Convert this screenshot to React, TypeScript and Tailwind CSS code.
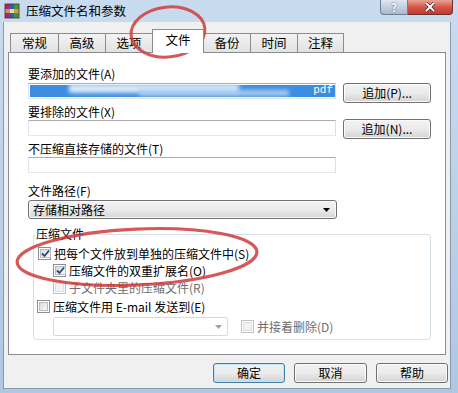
import React from 'react';

const CheckBox = ({ checked = false, disabled = false }: { checked?: boolean; disabled?: boolean }) => (
  <span
    className={
      disabled
        ? 'w-[13px] h-[13px] border border-[#c2c2c2] bg-white p-[1px] shrink-0 flex'
        : 'w-[13px] h-[13px] border border-[#8e8f8f] bg-white p-[1px] shrink-0 flex'
    }
  >
    <span
      className={
        disabled
          ? 'flex-1 bg-[#f2f2f2] border border-[#dedede]'
          : 'flex-1 bg-gradient-to-br from-[#d7dbe0] to-[#f8f8f8] border border-[#b9bcc1] flex items-center justify-center'
      }
    >
      {checked && (
        <svg width="9" height="9" viewBox="0 0 9 9">
          <path d="M1 4.5 L3.5 7 L8 1.5" fill="none" stroke="#2d4477" strokeWidth="1.8" />
        </svg>
      )}
    </span>
  </span>
);

const Tab = ({ label, w, active = false }: { label: string; w: string; active?: boolean }) => (
  <div
    className={
      active
        ? `${w} h-[24px] -mb-px -ml-px z-10 bg-white border border-b-0 border-[#898c95] flex items-start justify-center pt-[3px]`
        : `${w} h-[19px] -ml-px first:ml-0 bg-gradient-to-b from-[#f3f3f3] to-[#e2e2e2] border border-b-0 border-[#898c95] flex items-center justify-center`
    }
  >
    <span className="text-[12.5px] leading-[14px]">{label}</span>
  </div>
);

const TextBox = ({ w, children }: { w: string; children?: React.ReactNode }) => (
  <div className={`${w} h-[16px] border border-[#abadb3] border-b-[#e3e9ef] border-r-[#dbdfe6] border-l-[#e2e3ea] bg-white relative overflow-hidden`}>
    {children}
  </div>
);

const PushButton = ({ label, w, def = false }: { label: string; w: string; def?: boolean }) => (
  <button
    className={`${w} h-[20px] rounded-[3px] border ${
      def ? 'border-[#3c7fb1] shadow-[inset_0_0_0_1px_#bfe4f9]' : 'border-[#707070] shadow-[inset_0_0_0_1px_#fcfcfc]'
    } bg-gradient-to-b from-[#f2f2f2] via-[#ebebeb] to-[#d3d3d3] text-[12px] leading-[14px] text-black flex items-center justify-center`}
  >
    {label}
  </button>
);

export default function App() {
  return (
    <div className="w-[458px] h-[393px] relative overflow-hidden flex flex-col bg-gradient-to-b from-[#c9dbef] via-[#bcd2ea] to-[#aec7e3] font-['Noto_Sans_CJK_SC',sans-serif] text-black text-[12px] leading-[14px]">
      {/* title bar */}
      <div className="h-[22px] flex items-start shrink-0">
        <svg className="ml-[4px] mt-[3px]" width="16" height="16" viewBox="0 0 16 16">
          <rect x="1" y="1" width="4" height="14" fill="#b0207a" />
          <rect x="5" y="1" width="5" height="14" fill="#2a5fb8" />
          <rect x="10" y="1" width="5" height="14" fill="#3a9a3a" />
          <rect x="1" y="6" width="14" height="4" fill="#c89a5a" />
          <rect x="6" y="6" width="4" height="4" fill="#e8d7a8" />
          <rect x="1" y="1" width="14" height="14" fill="none" stroke="#5a2a10" strokeWidth="0.8" />
        </svg>
        <span className="ml-[6px] mt-[4px] text-[12.5px]">压缩文件名和参数</span>
        <div className="ml-auto mr-[5px] flex">
          <div className="w-[28px] h-[15px] rounded-bl-[4px] border border-t-0 border-[#6f7f93] bg-gradient-to-b from-[#dfe7f1] via-[#c3d0df] to-[#a9b9cc] flex items-center justify-center text-white text-[11px] font-bold [text-shadow:0_0_2px_#404c5c]">
            ?
          </div>
          <div className="w-[45px] h-[15px] rounded-br-[4px] border border-l-0 border-t-0 border-[#6b3131] bg-gradient-to-b from-[#e8a493] via-[#d4574a] to-[#c3372c] flex items-center justify-center">
            <svg width="12" height="10" viewBox="0 0 12 10">
              <path d="M2 1 L10 9 M10 1 L2 9" stroke="#3a1a1a" strokeWidth="3.2" />
              <path d="M2 1 L10 9 M10 1 L2 9" stroke="#fff" strokeWidth="2" />
            </svg>
          </div>
        </div>
      </div>

      {/* client */}
      <div className="ml-[3px] mr-[7px] h-[367px] bg-[#f0f0f0] border-l border-r border-b border-[#8799ae] flex flex-col">
        <div className="mt-[7px] ml-[6px] h-[23px] flex items-end">
          <Tab label="常规" w="w-[49px]" />
          <Tab label="高级" w="w-[48px]" />
          <Tab label="选项" w="w-[48px]" />
          <Tab label="文件" w="w-[52px]" active />
          <Tab label="备份" w="w-[48px]" />
          <Tab label="时间" w="w-[48px]" />
          <Tab label="注释" w="w-[47px]" />
        </div>

        <div className="ml-[4px] w-[438px] h-[303px] border border-[#898c95] bg-white flex flex-col pl-[19px]">
          <span className="mt-[14px]">要添加的文件(A)</span>
          <div className="mt-[2px] flex items-start">
            <TextBox w="w-[308px]">
              <div className="absolute inset-y-[1px] left-[1px] right-0 bg-[#3c8de0]" />
              <div className="absolute top-[0px] left-[40px] w-[170px] h-[9px] bg-[#d8e9f8] blur-[2px]" />
              <div className="absolute top-[6px] left-[110px] w-[150px] h-[6px] bg-[#a9cdf0] blur-[2px]" />
              <span className="absolute right-[2px] top-0 text-white text-[11px] leading-[13px] font-['Liberation_Mono',monospace]">pdf</span>
            </TextBox>
            <div className="ml-[7px]">
              <PushButton label="追加(P)..." w="w-[88px]" />
            </div>
          </div>
          <span className="mt-[2px]">要排除的文件(X)</span>
          <div className="flex items-start">
            <div className="mt-[1px]">
              <TextBox w="w-[308px]" />
            </div>
            <div className="ml-[7px]">
              <PushButton label="追加(N)..." w="w-[88px]" />
            </div>
          </div>
          <span className="mt-[3px]">不压缩直接存储的文件(T)</span>
          <div className="mt-[1px]">
            <TextBox w="w-[308px]" />
          </div>
          <span className="mt-[11px]">文件路径(F)</span>
          <div className="mt-[2px] w-[309px] h-[19px] rounded-[3px] border border-[#707070] bg-gradient-to-b from-[#f2f2f2] via-[#ebebeb] to-[#d6d6d6] shadow-[inset_0_0_0_1px_#fbfbfb] flex items-center pl-[4px] pr-[6px]">
            <span>存储相对路径</span>
            <svg className="ml-auto" width="7" height="4" viewBox="0 0 7 4">
              <path d="M0 0 H7 L3.5 4 Z" fill="#000" />
            </svg>
          </div>

          <fieldset className="mt-[8px] ml-[5px] w-[398px] border border-[#d5dfe5] rounded-[3px] pb-[3px]">
            <legend className="ml-[1px] px-[1px]">压缩文件</legend>
            <div className="mt-[4px] ml-[4px] h-[17px] flex items-center">
              <CheckBox checked />
              <span className="ml-[3px]">把每个文件放到单独的压缩文件中(S)</span>
            </div>
            <div className="ml-[19px] h-[17px] flex items-center">
              <CheckBox checked />
              <span className="ml-[3px]">压缩文件的双重扩展名(O)</span>
            </div>
            <div className="ml-[19px] h-[17px] flex items-center">
              <CheckBox disabled />
              <span className="ml-[3px] text-[#6d6d6d]">子文件夹里的压缩文件(R)</span>
            </div>
            <div className="mt-[2px] ml-[3px] h-[17px] flex items-center">
              <CheckBox />
              <span className="ml-[3px]">压缩文件用 E-mail 发送到(E)</span>
            </div>
            <div className="mt-[2px] ml-[19px] flex items-center">
              <div className="w-[175px] h-[19px] border border-[#d9d9d9] rounded-[2px] bg-white flex items-center justify-end pr-[5px]">
                <svg width="7" height="4" viewBox="0 0 7 4">
                  <path d="M0 0 H7 L3.5 4 Z" fill="#a0a0a0" />
                </svg>
              </div>
              <div className="ml-[13px] flex items-center">
                <CheckBox disabled />
                <span className="ml-[3px] text-[#6d6d6d]">并接着删除(D)</span>
              </div>
            </div>
          </fieldset>
        </div>

        <div className="mt-[8px] ml-[209px] flex gap-[9px]">
          <PushButton label="确定" w="w-[72px]" def />
          <PushButton label="取消" w="w-[73px]" />
          <PushButton label="帮助" w="w-[72px]" />
        </div>
      </div>

      {/* red annotation marks */}
      <svg className="absolute inset-0 pointer-events-none" width="458" height="393" viewBox="0 0 458 393">
        <ellipse cx="168" cy="32" rx="37" ry="25" transform="rotate(-6 168 32)" fill="none" stroke="#cf3c3c" strokeOpacity="0.85" strokeWidth="3" />
        <ellipse cx="137" cy="257" rx="120" ry="28" transform="rotate(-2.5 137 257)" fill="none" stroke="#cf3c3c" strokeOpacity="0.85" strokeWidth="3.2" />
      </svg>
    </div>
  );
}
